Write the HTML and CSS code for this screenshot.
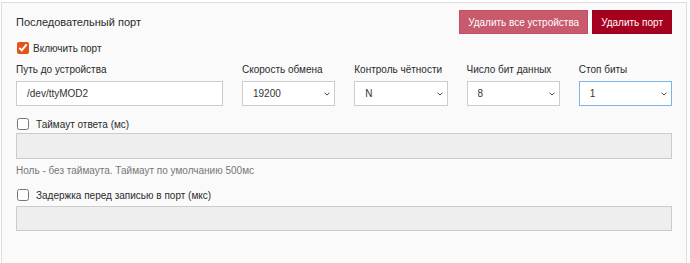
FILE: index.html
```html
<!DOCTYPE html>
<html lang="ru">
<head>
    <meta charset="UTF-8">
    <title>Последовательный порт</title>
    <link rel="stylesheet" href="styles.css">
</head>
<body>

<div class="panel">
    <div class="panel-head">
        <span class="panel-title">Последовательный порт</span>
        <div class="actions">
            <button class="btn btn-light">Удалить все устройства</button>
            <button class="btn btn-dark">Удалить порт</button>
        </div>
    </div>

    <label class="check check-on"><input type="checkbox" checked> Включить порт</label>

    <div class="fields">
        <div class="field">
            <label>Путь до устройства</label>
            <input type="text" value="/dev/ttyMOD2">
        </div>
        <div class="field">
            <label>Скорость обмена</label>
            <div class="select-wrap">
                <select><option>19200</option></select>
                <svg class="caret" width="6" height="4" viewBox="0 0 6 4"><path d="M0.5 0.8l2.5 2.2l2.5-2.2" fill="none" stroke="#444" stroke-width="1"/></svg>
            </div>
        </div>
        <div class="field">
            <label>Контроль чётности</label>
            <div class="select-wrap">
                <select><option>N</option></select>
                <svg class="caret" width="6" height="4" viewBox="0 0 6 4"><path d="M0.5 0.8l2.5 2.2l2.5-2.2" fill="none" stroke="#444" stroke-width="1"/></svg>
            </div>
        </div>
        <div class="field">
            <label>Число бит данных</label>
            <div class="select-wrap">
                <select><option>8</option></select>
                <svg class="caret" width="6" height="4" viewBox="0 0 6 4"><path d="M0.5 0.8l2.5 2.2l2.5-2.2" fill="none" stroke="#444" stroke-width="1"/></svg>
            </div>
        </div>
        <div class="field">
            <label>Стоп биты</label>
            <div class="select-wrap">
                <select class="focused"><option>1</option></select>
                <svg class="caret" width="6" height="4" viewBox="0 0 6 4"><path d="M0.5 0.8l2.5 2.2l2.5-2.2" fill="none" stroke="#444" stroke-width="1"/></svg>
            </div>
        </div>
    </div>

    <label class="check check-timeout"><input type="checkbox"> Таймаут ответа (мс)</label>
    <input type="text" class="wide" disabled>
    <p class="hint">Ноль - без таймаута. Таймаут по умолчанию 500мс</p>

    <label class="check check-delay"><input type="checkbox"> Задержка перед записью в порт (мкс)</label>
    <input type="text" class="wide wide-last" disabled>
</div>

</body>
</html>
```

FILE: styles.css
```css
body {
    margin: 0;
    background: #fff;
    font-family: "Liberation Sans", Arial, sans-serif;
    font-size: 10px;
    color: #2b2b2b;
    overflow: hidden;
}
.panel {
    box-sizing: border-box;
    margin: 2px 3px 0 1px;
    height: 262px;
    padding: 7px 14px 0 14px;
    background-color: #fafafa;
    border: 1px solid #ddd;
}
.panel-head {
    display: flex;
    justify-content: space-between;
    align-items: center;
    height: 24px;
}
.panel-title {
    font-size: 11px;
}
.actions {
    display: flex;
    gap: 4px;
}
.btn {
    height: 24px;
    padding: 0 8px;
    color: white;
    border: 1px solid transparent;
    font-family: inherit;
    font-size: 10px;
    cursor: pointer;
}
.btn-light {
    background-color: #c75a6c;
    border-color: #c24f62;
}
.btn-dark {
    background-color: #a6001f;
    border-color: #98001c;
}
.check {
    display: flex;
    align-items: center;
    gap: 7px;
    height: 14px;
    margin-top: 7px;
}
.check input {
    margin: 0 0 0 1px;
    width: 12px;
    height: 12px;
}
.check-on {
    gap: 4px;
}
.check-on input {
    accent-color: #e2541c;
}
.fields {
    display: grid;
    grid-template-columns: 207px repeat(4, 1fr);
    gap: 19px;
    margin-top: 9px;
}
.field label {
    display: block;
    white-space: nowrap;
    line-height: 12px;
    margin-bottom: 5px;
}
input[type=text], select {
    box-sizing: border-box;
    width: 100%;
    height: 25px;
    border: 1px solid #ccc;
    background-color: #fff;
    font-family: inherit;
    font-size: 10px;
    color: #333;
    padding: 0 10px;
    outline: none;
}
.select-wrap {
    position: relative;
}
select {
    appearance: none;
}
.caret {
    position: absolute;
    right: 5px;
    top: 11px;
    pointer-events: none;
}
select.focused {
    border-color: #7cb5ec;
}
.check-timeout {
    margin-top: 11px;
}
.wide {
    display: block;
    margin-top: 2px;
}
input.wide:disabled {
    height: 26px;
    background-color: #eee;
}
.hint {
    margin: 6px 0 0;
    line-height: 12px;
    color: #777;
}
.check-delay {
    margin-top: 11px;
}
.wide-last {
    margin-top: 4px;
}
input.wide-last:disabled {
    height: 25px;
}
```
